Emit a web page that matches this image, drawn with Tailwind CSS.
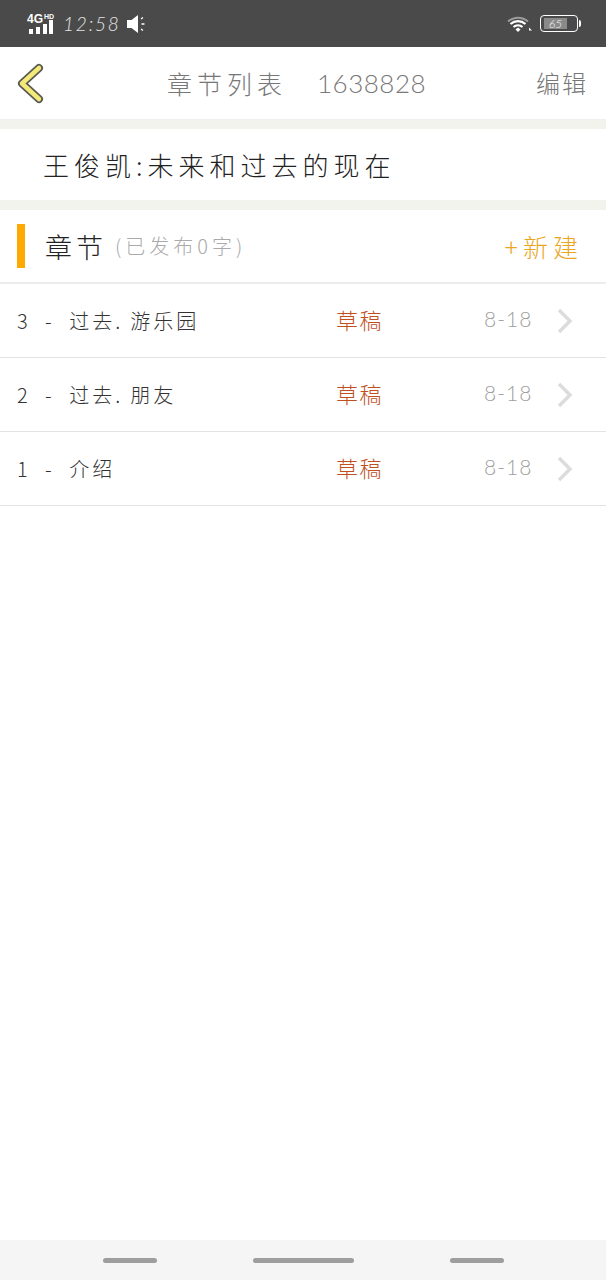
<!DOCTYPE html>
<html lang="zh">
<head>
  <meta charset="UTF-8">
  <meta name="viewport" content="width=device-width, initial-scale=1">
  <title>章节列表</title>
  <script src="https://cdn.jsdelivr.net/npm/@tailwindcss/browser@4"></script>
</head>
<body class="bg-white min-h-screen font-['Noto_Sans_CJK_SC','Noto_Sans',sans-serif] font-light">
  <div class="w-[606px] h-[1280px] flex flex-col overflow-hidden">

    <!-- status bar -->
    <div class="h-[47px] bg-[#4a4a4a] flex items-center pl-[27px] pr-[25px] text-white">
      <svg width="29" height="21" viewBox="0 0 29 21" class="shrink-0">
        <text x="0" y="10" font-size="12" font-weight="700" fill="#fff" font-family="Liberation Sans">4G</text>
        <text x="17" y="6" font-size="7" font-weight="700" fill="#fff" font-family="Liberation Sans">HD</text>
        <rect x="2" y="16" width="4" height="5" fill="#fff"/>
        <rect x="9" y="14" width="4" height="7" fill="#fff"/>
        <rect x="16" y="11" width="4" height="10" fill="#fff"/>
        <rect x="22" y="7" width="4" height="14" fill="#fff"/>
      </svg>
      <span class="ml-[7px] text-[19px] leading-none tracking-[1.800px] font-['Lato'] italic font-light text-white/85">12:58</span>
      <svg width="20" height="20" viewBox="0 0 20 20" class="ml-[5px] shrink-0">
        <path d="M1 6h4.500L12 1v18l-6.500-5H1z" fill="#fff"/>
        <path d="M15 5l2-1.500M15.500 10h3M15 15l2 1.500" stroke="#fff" stroke-width="1.300"/>
      </svg>
      <div class="flex-1"></div>
      <svg width="26" height="20" viewBox="0 0 26 20" class="shrink-0">
        <path d="M1 7.500a15 15 0 0 1 20 0" fill="none" stroke="#fff" stroke-opacity="0.45" stroke-width="2"/>
        <path d="M3.500 10a11.500 11.500 0 0 1 15 0" fill="none" stroke="#fff" stroke-width="2.200"/>
        <path d="M6.500 13a7 7 0 0 1 9 0" fill="none" stroke="#fff" stroke-width="2.200"/>
        <path d="M8.500 15.500l2.500-2 2.500 2-2.500 2.500z" fill="#fff"/>
        <path d="M22 13.500l3 3h-3z" fill="#fff"/>
      </svg>
      <div class="ml-[7px] flex items-center shrink-0">
        <div class="w-[38px] h-[17px] border border-white rounded-[4px] p-[2px] flex">
          <div class="w-[23px] ml-[1px] bg-[#8a8a8a] flex items-center justify-center text-[12px] leading-none italic text-white/90 font-['Lato'] font-light">65</div>
        </div>
        <div class="w-[2px] h-[7px] bg-white ml-[1px] rounded-r-sm"></div>
      </div>
    </div>

    <!-- header -->
    <div class="h-[73px] flex items-center pl-[17px] pr-[18px] border-b border-[#f0f0ec]">
      <svg width="29" height="44" viewBox="0 0 29 44" class="shrink-0">
        <path d="M22 7L5 22.500 22 38" fill="none" stroke="#5a5a50" stroke-width="8" stroke-linecap="round" stroke-linejoin="round"/>
        <path d="M22 7L5 22.500 22 38" fill="none" stroke="#f3ea7a" stroke-width="4.500" stroke-linecap="round" stroke-linejoin="round"/>
      </svg>
      <span class="ml-[121px] text-[25px] leading-none tracking-[5px] text-[#777] whitespace-nowrap">章节列表</span>
      <span class="ml-[30px] text-[26px] leading-none tracking-[0.500px] text-[#777] font-['Lato'] font-light whitespace-nowrap">1638828</span>
      <div class="flex-1"></div>
      <span class="text-[24px] leading-none tracking-[2px] text-[#777] whitespace-nowrap">编辑</span>
    </div>

    <div class="h-[9px] bg-[#f3f3ee]"></div>

    <!-- book title -->
    <div class="h-[71px] flex items-center pl-[43px]">
      <span class="text-[26px] leading-none tracking-[5px] text-[#222] whitespace-nowrap">王俊凯:未来和过去的现在</span>
    </div>

    <div class="h-[10px] bg-[#f3f3ee]"></div>

    <!-- section heading -->
    <div class="h-[74px] flex items-center border-b-2 border-[#ececec] pl-[17px] pr-[23px]">
      <div class="w-[8px] h-[44px] bg-[#ffa800]"></div>
      <span class="ml-[20px] text-[27px] leading-none tracking-[4px] text-[#222] whitespace-nowrap">章节</span>
      <span class="ml-[8px] text-[20px] leading-none tracking-[4px] text-[#aaa] whitespace-nowrap">(已发布0字)</span>
      <div class="flex-1"></div>
      <span class="text-[25px] leading-none tracking-[5px] text-[#eba51f] whitespace-nowrap">+新建</span>
    </div>

    <!-- chapter rows -->
    <div class="h-[74px] flex items-center border-b border-[#e3e3e3] pl-[17px] pr-[33px]">
      <span class="w-[319px] text-[20px] leading-none tracking-[3px] [word-spacing:7px] text-[#333] whitespace-nowrap">3 - 过去.&thinsp;游乐园</span>
      <span class="w-[148px] mb-[3px] text-[22px] leading-none tracking-[1.500px] text-[#c0501f] whitespace-nowrap">草稿</span>
      <span class="w-[73px] mb-[5px] text-[21px] leading-none tracking-[1px] text-[#a0a0a0] font-['Lato'] font-light whitespace-nowrap">8-18</span>
      <svg width="16" height="26" viewBox="0 0 16 26" class="shrink-0">
        <path d="M2 2l11 11L2 24" fill="none" stroke="#dcdcdc" stroke-width="3.500"/>
      </svg>
    </div>
    <div class="h-[74px] flex items-center border-b border-[#e3e3e3] pl-[17px] pr-[33px]">
      <span class="w-[319px] text-[20px] leading-none tracking-[3px] [word-spacing:7px] text-[#333] whitespace-nowrap">2 - 过去.&thinsp;朋友</span>
      <span class="w-[148px] mb-[3px] text-[22px] leading-none tracking-[1.500px] text-[#c0501f] whitespace-nowrap">草稿</span>
      <span class="w-[73px] mb-[5px] text-[21px] leading-none tracking-[1px] text-[#a0a0a0] font-['Lato'] font-light whitespace-nowrap">8-18</span>
      <svg width="16" height="26" viewBox="0 0 16 26" class="shrink-0">
        <path d="M2 2l11 11L2 24" fill="none" stroke="#dcdcdc" stroke-width="3.500"/>
      </svg>
    </div>
    <div class="h-[74px] flex items-center border-b border-[#e3e3e3] pl-[17px] pr-[33px]">
      <span class="w-[319px] text-[20px] leading-none tracking-[3px] [word-spacing:7px] text-[#333] whitespace-nowrap">1 - 介绍</span>
      <span class="w-[148px] mb-[3px] text-[22px] leading-none tracking-[1.500px] text-[#c0501f] whitespace-nowrap">草稿</span>
      <span class="w-[73px] mb-[5px] text-[21px] leading-none tracking-[1px] text-[#a0a0a0] font-['Lato'] font-light whitespace-nowrap">8-18</span>
      <svg width="16" height="26" viewBox="0 0 16 26" class="shrink-0">
        <path d="M2 2l11 11L2 24" fill="none" stroke="#dcdcdc" stroke-width="3.500"/>
      </svg>
    </div>

    <div class="flex-1"></div>

    <!-- nav bar -->
    <div class="h-[40px] bg-[#f5f5f5] flex items-center pl-[103px] pt-[1px]">
      <div class="w-[54px] h-[5px] rounded-full bg-[#9e9e9e]"></div>
      <div class="ml-[96px] w-[101px] h-[5px] rounded-full bg-[#9e9e9e]"></div>
      <div class="ml-[96px] w-[54px] h-[5px] rounded-full bg-[#9e9e9e]"></div>
    </div>
  </div>
</body>
</html>
